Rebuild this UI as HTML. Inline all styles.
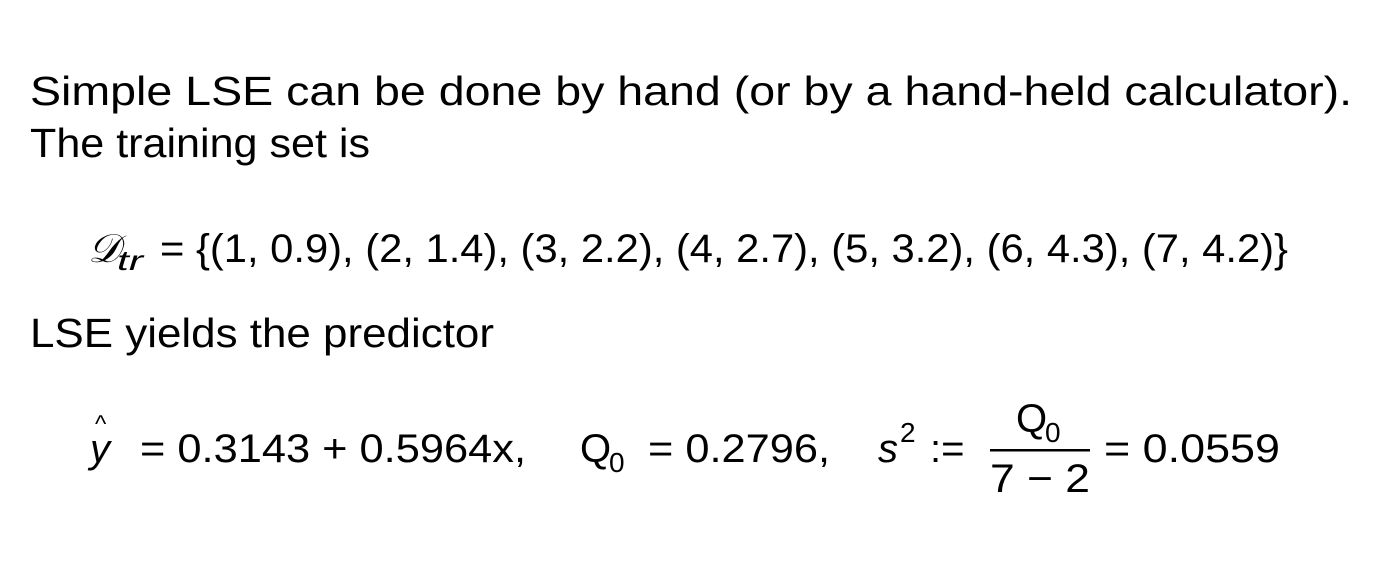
<!DOCTYPE html>
<html><head><meta charset="utf-8"><style>
html,body{margin:0;padding:0;background:#fff;}
svg{display:block}
text{font-family:"Liberation Sans",sans-serif;fill:#000}
</style></head><body>
<svg width="1382" height="580" viewBox="0 0 1382 580" xmlns="http://www.w3.org/2000/svg">
<text x="30" y="105" font-size="41" textLength="1322" lengthAdjust="spacingAndGlyphs">Simple LSE can be done by hand (or by a hand-held calculator).</text>
<text x="30" y="157" font-size="41" textLength="340" lengthAdjust="spacingAndGlyphs">The training set is</text>
<text x="88" y="262" font-size="40" font-family="Liberation Serif" font-style="italic">𝒟</text>
<text x="117" y="270" font-size="28" font-style="italic" textLength="26" lengthAdjust="spacingAndGlyphs">tr</text>
<text x="160" y="262" font-size="40" textLength="1128" lengthAdjust="spacingAndGlyphs">= {(1, 0.9), (2, 1.4), (3, 2.2), (4, 2.7), (5, 3.2), (6, 4.3), (7, 4.2)}</text>
<text x="30" y="347" font-size="41" textLength="464" lengthAdjust="spacingAndGlyphs">LSE yields the predictor</text>
<text x="90" y="462" font-size="40" font-style="italic">y</text>
<text x="95" y="432" font-size="24">^</text>
<text x="140" y="462" font-size="40" textLength="386" lengthAdjust="spacingAndGlyphs">= 0.3143 + 0.5964x,</text>
<text x="580" y="462" font-size="40">Q</text>
<text x="609" y="472" font-size="28">0</text>
<text x="648" y="462" font-size="40" textLength="182" lengthAdjust="spacingAndGlyphs">= 0.2796,</text>
<text x="878" y="462" font-size="40" font-style="italic">s</text>
<text x="900" y="442" font-size="28">2</text>
<text x="930" y="462" font-size="40">:=</text>
<text x="1016" y="432" font-size="40">Q</text>
<text x="1045" y="442" font-size="28">0</text>
<rect x="990" y="449" width="100" height="2.5" fill="#000"/>
<text x="990" y="492" font-size="40" textLength="100" lengthAdjust="spacingAndGlyphs">7 − 2</text>
<text x="1104" y="462" font-size="40" textLength="176" lengthAdjust="spacingAndGlyphs">= 0.0559</text>
</svg>
</body></html>
